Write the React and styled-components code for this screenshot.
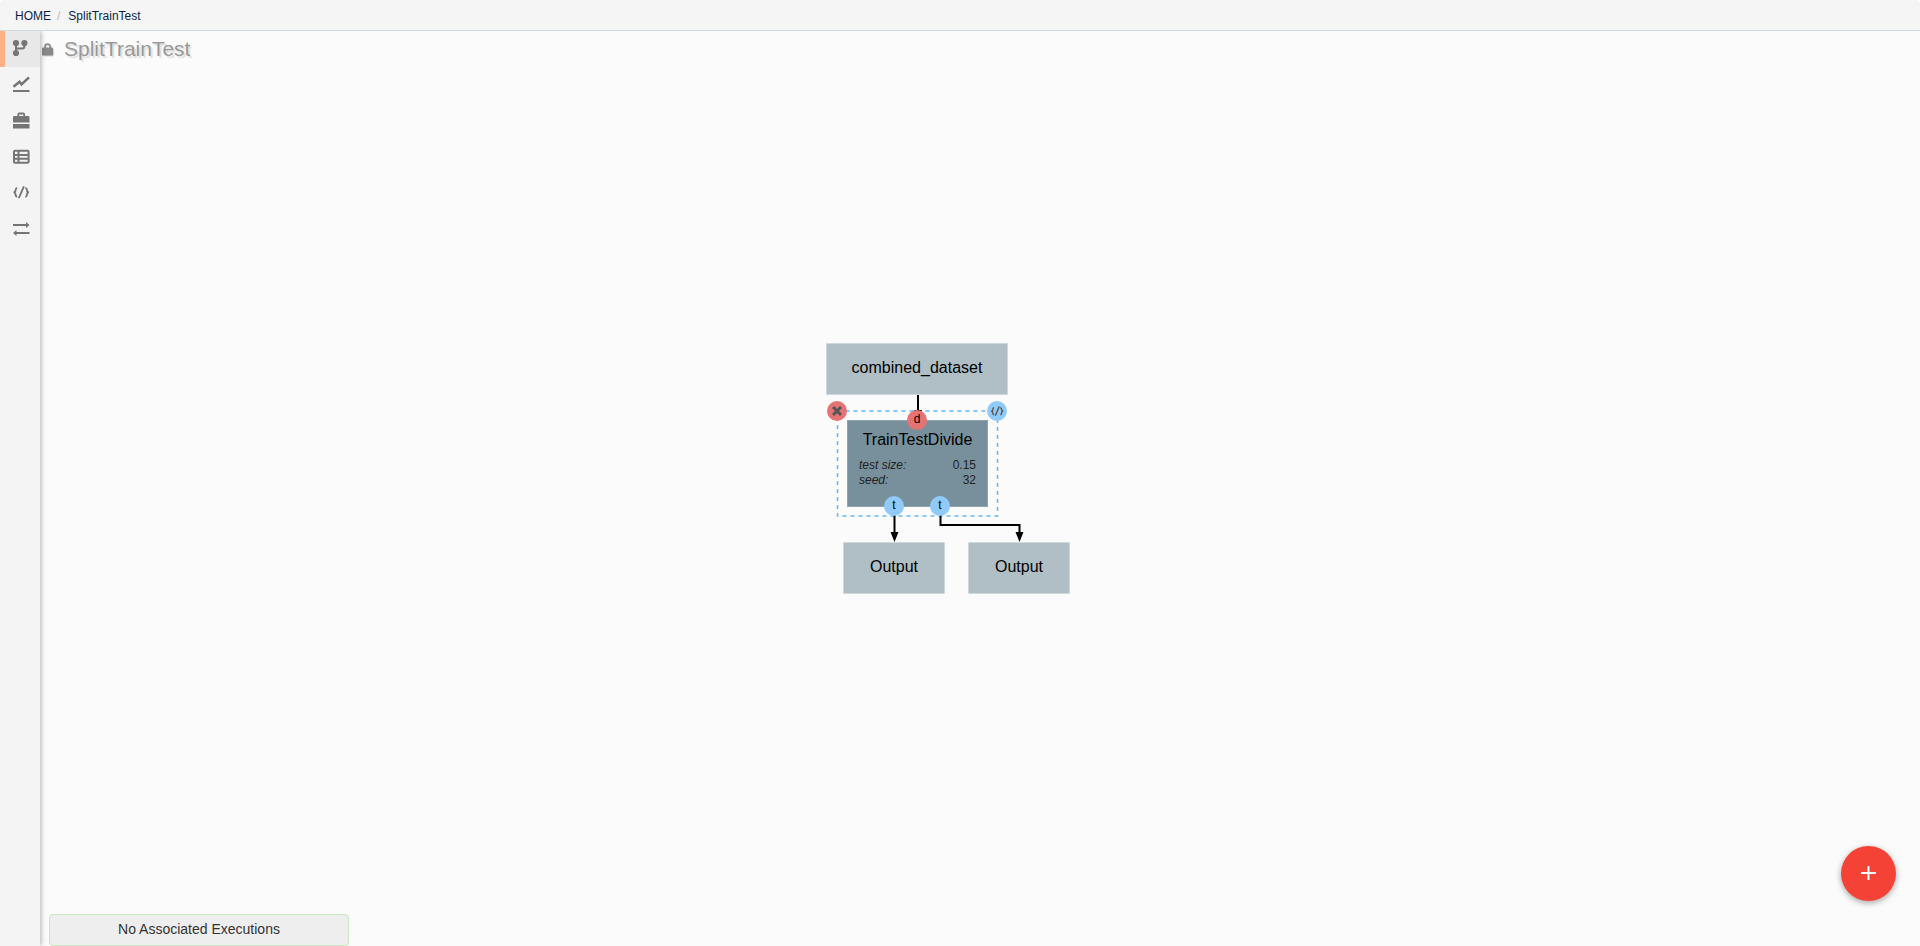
import React from "react";
import styled, { createGlobalStyle } from "styled-components";

const GlobalStyle = createGlobalStyle`
  *, *::before, *::after { box-sizing: border-box; }
  body {
    margin: 0;
    background: #fff;
    font-family: "Liberation Sans", Arial, sans-serif;
    color: #000;
  }
`;

const Page = styled.div`
  display: flex;
  flex-direction: column;
  height: 100vh;
  overflow: hidden;
`;

const Breadcrumb = styled.nav`
  display: flex;
  align-items: center;
  flex: none;
  height: 31px;
  padding: 6px 15px 4px;
  gap: 6px;
  background: #f5f5f5;
  border-bottom: 1px solid #cfd8dc;
  border-radius: 4px 4px 0 0;
  font-size: 12px;
  line-height: 16px;
`;

const Crumb = styled.a`
  color: #0b1f4b;
  text-decoration: none;
`;

const Slash = styled.span`
  color: #bbb;
  padding-right: 2px;
`;

const Body = styled.div`
  display: flex;
  flex: 1;
  min-height: 0;
`;

const Sidebar = styled.nav`
  display: flex;
  flex-direction: column;
  flex: none;
  width: 40px;
  background: #f4f4f4;
  box-shadow: 1px 0 5px rgba(0, 0, 0, 0.3);
  clip-path: inset(0 -8px 0 0);
  z-index: 1;
`;

const SideLink = styled.a`
  display: flex;
  align-items: center;
  height: 36px;
  padding: 0 0 2px;
  padding-left: ${(p) => (p.$active ? "7px" : "12px")};
  border-left: ${(p) => (p.$active ? "5px solid #ffb084" : "0")};
  background: ${(p) => (p.$active ? "#e8e8e8" : "transparent")};
  color: #757575;
  svg { display: block; }
`;

const Workspace = styled.main`
  display: flex;
  flex-direction: column;
  flex: 1;
  min-width: 0;
  background: #fbfbfb;
`;

const TitleRow = styled.header`
  display: flex;
  align-items: center;
  flex: none;
  height: 36px;
  padding-left: 1px;
  gap: 10px;
  color: #888;
  svg { filter: drop-shadow(1px 1px 0 #d5d5d5); }
`;

const Title = styled.h1`
  margin: 0;
  font-size: 21px;
  line-height: 24px;
  font-weight: 400;
  color: #999;
  text-shadow: 2px 2px 1px #ddd;
`;

const Canvas = styled.section`
  display: flex;
  flex: 1;
  align-items: center;
  justify-content: center;
  min-height: 0;
  padding: 0 64px 43px 0;
`;

const Diagram = styled.div`
  position: relative;
  flex: none;
  width: 244px;
  height: 252px;
`;

const Edges = styled.svg`
  position: absolute;
  inset: 0;
  overflow: visible;
`;

const Node = styled.div`
  position: absolute;
  left: ${(p) => p.$x}px;
  top: ${(p) => p.$y}px;
  width: ${(p) => p.$w}px;
  height: ${(p) => p.$h}px;
  padding-top: ${(p) => (p.$dark ? "9px" : "14px")};
  background: ${(p) => (p.$dark ? "#78909c" : "#b0bec5")};
  border: 1px solid ${(p) => (p.$dark ? "#90a4ae" : "#cfd8dc")};
  font-size: 16px;
  line-height: 20px;
  text-align: center;
`;

const Params = styled.dl`
  display: grid;
  grid-template-columns: auto auto;
  justify-content: space-between;
  margin: 8px 11px 0;
  font-size: 12px;
  line-height: 15px;
  color: #222;
  dt { font-style: italic; text-align: left; }
  dd { margin: 0; text-align: right; }
`;

const Badge = styled.button`
  position: absolute;
  left: ${(p) => p.$x - 10}px;
  top: ${(p) => p.$y - 10}px;
  display: flex;
  align-items: center;
  justify-content: center;
  width: 20px;
  height: 20px;
  padding: 0 0 2px;
  border: 0;
  border-radius: 50%;
  background: ${(p) => (p.$red ? "#e57373" : "#90caf9")};
  color: #000;
  font: 12px/18px "Liberation Sans", Arial, sans-serif;
`;

const IconBadge = styled(Badge)`
  padding: 0;
  color: #555;
`;

const Status = styled.footer`
  flex: none;
  align-self: flex-start;
  width: 300px;
  height: 32px;
  margin-left: 9px;
  padding-top: 4px;
  border: 1px solid #c8e6c0;
  border-radius: 4px;
  background: #eee;
  color: #333;
  font-size: 14px;
  line-height: 20px;
  text-align: center;
`;

const AddButton = styled.button`
  position: fixed;
  right: 24px;
  bottom: 45px;
  display: flex;
  align-items: center;
  justify-content: center;
  width: 55px;
  height: 55px;
  padding: 0;
  border: 0;
  border-radius: 50%;
  background: #f44336;
  color: #fff;
  box-shadow: 0 2px 6px rgba(0, 0, 0, 0.35);
`;

const Svg = ({ children, size = 18 }) => (
  <svg width={size} height={size} viewBox="0 0 18 18" fill="none" stroke="currentColor" strokeWidth="2" aria-hidden="true">
    {children}
  </svg>
);

const ForkIcon = () => (
  <Svg>
    <g fill="currentColor" stroke="none">
      <circle cx="4" cy="4" r="3.1" />
      <circle cx="12.4" cy="4" r="3.1" />
      <circle cx="4" cy="14" r="3.1" />
    </g>
    <path d="M4 4v10M12.4 4v3.2q0 2.3-2.3 2.3H4" />
  </Svg>
);

const ChartIcon = () => (
  <Svg>
    <path d="M1.5 11.8l6-5 2 2.6L17 2.4" strokeWidth="2.6" />
    <path d="M1 16h16.500" />
  </Svg>
);

const BriefcaseIcon = () => (
  <Svg>
    <path d="M6.300 5V3.500q0-1 1-1h3.900q1 0 1 1V5" strokeWidth="1.8" />
    <path d="M2.400 5h13.700q1.400 0 1.400 1.400V11.400H1V6.400q0-1.400 1.400-1.400zM1 13h16.500v4.600H1z" fill="currentColor" stroke="none" />
  </Svg>
);

const TableIcon = () => (
  <Svg>
    <rect x="2" y="3.800" width="14.600" height="12" rx="1" />
    <path d="M6.500 4v12M2 8h14.600M2 11.800h14.600" strokeWidth="2" />
  </Svg>
);

const CodeIcon = ({ size }) => (
  <Svg size={size}>
    <path d="M5.200 4.800Q3.600 5 3.600 7T1.600 9.300Q3.600 9.500 3.600 11.600T5.200 13.800M13.300 4.800q1.600.2 1.600 2.200t2 2.300q-2 .2-2 2.300t-1.600 2.200" strokeWidth="1.800" />
    <path d="M11.900 3.300L6.800 15.200" strokeWidth="1.800" />
  </Svg>
);

const SwapIcon = () => (
  <Svg>
    <path d="M1 6h14M17.500 14H4" />
    <path d="M14 3l3.500 3-3.500 3zM4.500 11L1 14l3.500 3z" fill="currentColor" stroke="none" />
  </Svg>
);

const LockIcon = () => (
  <svg width="13" height="14" viewBox="0 0 13 14" aria-hidden="true">
    <path d="M4 6V4.500a2.500 2.500 0 0 1 5 0V6" fill="none" stroke="currentColor" strokeWidth="1.600" />
    <rect x="1" y="5.500" width="11" height="8" rx="1" fill="currentColor" />
  </svg>
);

const sections = [
  ["Pipeline", ForkIcon],
  ["Results", ChartIcon],
  ["Resources", BriefcaseIcon],
  ["Data", TableIcon],
  ["Code", CodeIcon],
  ["Transfer", SwapIcon],
];

export default function App() {
  return (
    <Page>
      <GlobalStyle />
      <Breadcrumb aria-label="Breadcrumb">
        <Crumb href="#home">HOME</Crumb>
        <Slash>/</Slash>
        <Crumb href="#pipeline">SplitTrainTest</Crumb>
      </Breadcrumb>
      <Body>
        <Sidebar aria-label="Sections">
          {sections.map(([name, Icon], i) => (
            <SideLink key={name} href={`#${name}`} aria-label={name} $active={i === 0}>
              <Icon />
            </SideLink>
          ))}
        </Sidebar>
        <Workspace>
          <TitleRow>
            <LockIcon />
            <Title>SplitTrainTest</Title>
          </TitleRow>
          <Canvas aria-label="Pipeline diagram">
            <Diagram>
              <Node $x={0} $y={0} $w={182} $h={52}>combined_dataset</Node>
              <Node $x={21} $y={77} $w={141} $h={87} $dark>
                TrainTestDivide
                <Params>
                  <dt>test size:</dt>
                  <dd>0.15</dd>
                  <dt>seed:</dt>
                  <dd>32</dd>
                </Params>
              </Node>
              <Node $x={17} $y={199} $w={102} $h={52}>Output</Node>
              <Node $x={142} $y={199} $w={102} $h={52}>Output</Node>
              <Edges width="244" height="252" aria-hidden="true">
                <rect x="11.5" y="68" width="160" height="105" fill="none" stroke="#64b8f6" strokeWidth="1.5" strokeDasharray="4 4" />
                <g fill="none" stroke="#000" strokeWidth="2">
                  <path d="M92 52v17M68.500 164v28M114.500 164v18h79v10" />
                </g>
                <path d="M88 67h8l-4 8zM64.500 189h8l-4 10zM189.500 189h8l-4 10z" />
              </Edges>
              <IconBadge $x={11} $y={68} $red aria-label="Remove">
                <svg width="10" height="10" viewBox="0 0 10 10" stroke="currentColor" strokeWidth="3" aria-hidden="true">
                  <path d="M1 1l8 8M9 1l-8 8" />
                </svg>
              </IconBadge>
              <IconBadge $x={171} $y={68} aria-label="Edit code">
                <CodeIcon size={14} />
              </IconBadge>
              <Badge $x={91} $y={77} $red>d</Badge>
              <Badge $x={68} $y={163}>t</Badge>
              <Badge $x={114} $y={163}>t</Badge>
            </Diagram>
          </Canvas>
          <Status>No Associated Executions</Status>
        </Workspace>
      </Body>
      <AddButton aria-label="Add">
        <svg width="15" height="15" viewBox="0 0 15 15" stroke="currentColor" strokeWidth="2" aria-hidden="true">
          <path d="M7.500 0v14M0 7h15" />
        </svg>
      </AddButton>
    </Page>
  );
}
